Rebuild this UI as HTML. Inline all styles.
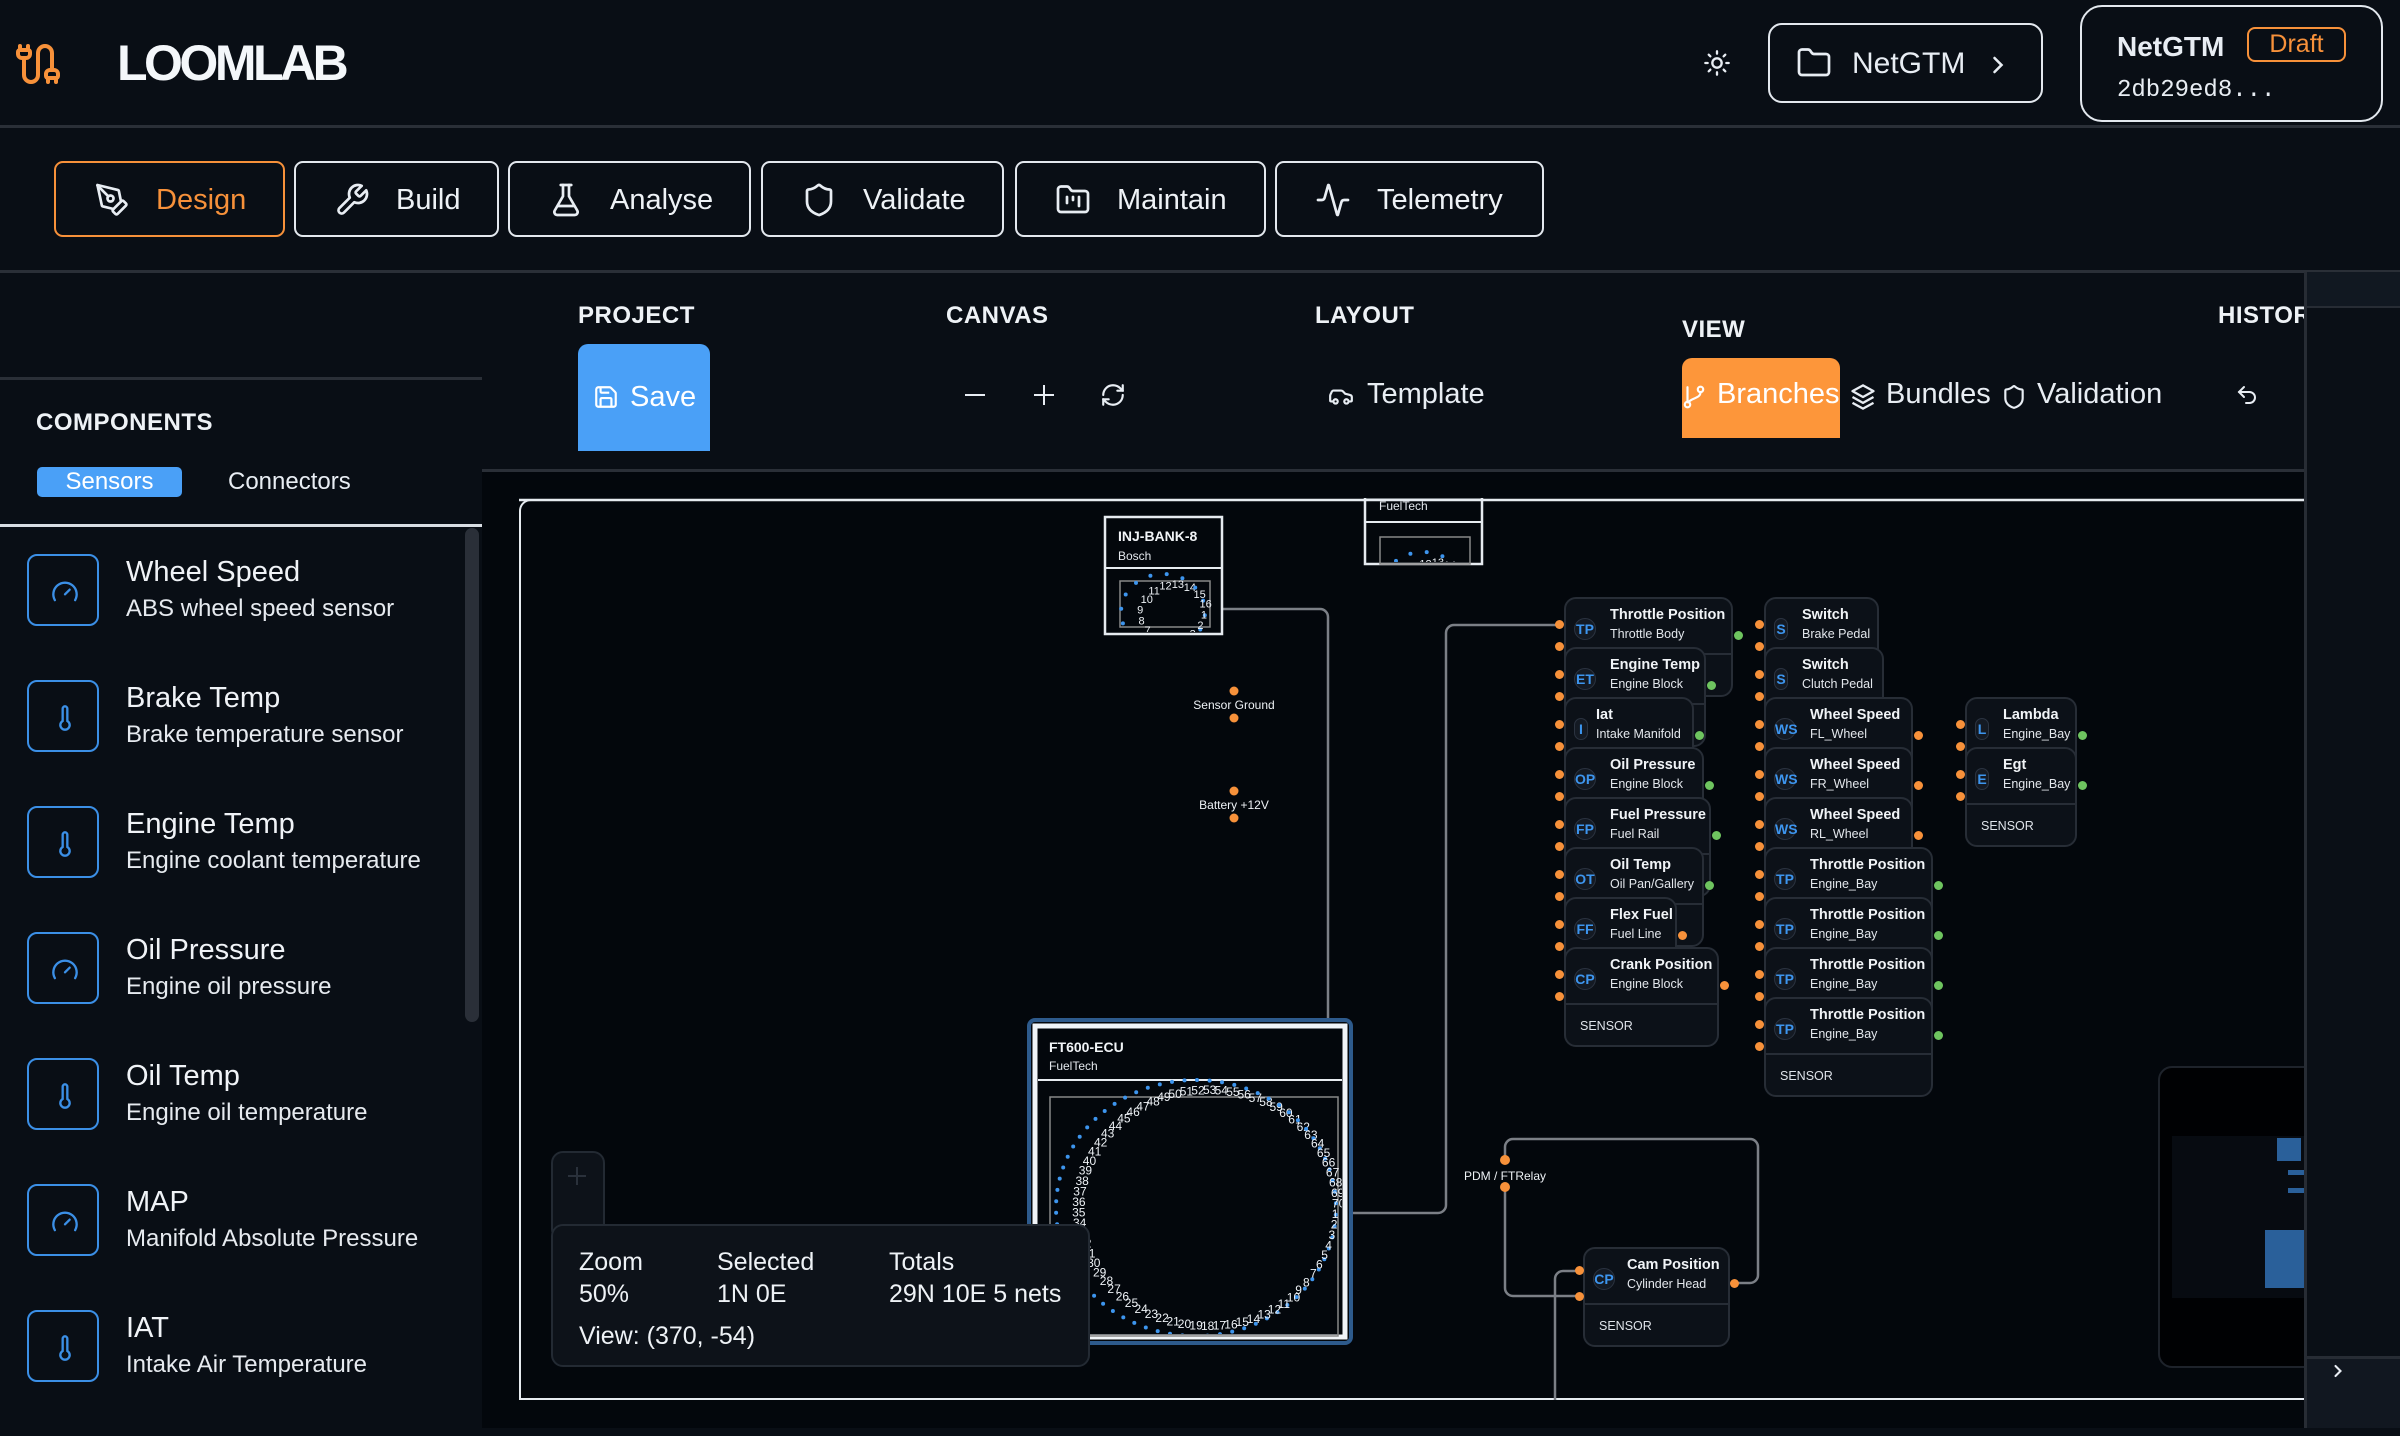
<!DOCTYPE html>
<html><head><meta charset="utf-8">
<style>
*{box-sizing:border-box;margin:0;padding:0}
body{width:2400px;height:1428px;overflow:hidden;background:#090e15;font-family:"Liberation Sans",sans-serif;color:#e8edf3;position:relative}
.a{position:absolute}
.tab{position:absolute;top:161px;height:76px;border:2px solid #e3e8ee;border-radius:9px;font-size:29px;font-weight:500;color:#eef2f6}
.tab svg{position:absolute;left:38px;top:19px}
.tab span{position:absolute;left:100px;top:21px}
.lbl{position:absolute;font-size:24px;font-weight:700;letter-spacing:.5px;color:#eef2f6}
.item{position:absolute;left:27px;width:440px;height:126px}
.item .ic{position:absolute;left:0;top:0;width:72px;height:72px;border:2px solid #3b8fe6;border-radius:10px}
.item .ic svg{position:absolute;left:22px;top:22px}
.item .t{position:absolute;left:99px;top:2px;font-size:29px;font-weight:500;color:#f0f3f7}
.item .d{position:absolute;left:99px;top:41px;font-size:24px;color:#e6eaef}
.node{position:absolute;height:100px;background:#0c1118;border:2px solid #272d36;border-radius:12px}
.node .sep{position:absolute;left:0;right:0;top:54px;border-top:2px solid #272d36}
.node .bd{position:absolute;left:8px;top:19px;width:22px;height:22px;border-radius:50%;background:#141a23;border:1px solid #2b3340;color:#3d95ee;font-size:14px;font-weight:700;text-align:center;line-height:20px}
.node .tt{position:absolute;top:8px;font-size:14.5px;font-weight:700;color:#f1f4f7;white-space:nowrap}
.node .st{position:absolute;top:28px;font-size:12.5px;color:#e3e7ec;white-space:nowrap}
.node .ft{position:absolute;left:14px;top:70px;font-size:12.5px;color:#dfe4ea}
.p{position:absolute;width:9px;height:9px;border-radius:50%}
.o{background:#f7913a}.g{background:#6ec45f}
</style></head><body>

<!-- header -->
<svg class="a" style="left:14px;top:40px" width="48" height="48" viewBox="0 0 24 24" fill="none" stroke="#f7913a" stroke-width="2" stroke-linecap="round" stroke-linejoin="round"><path d="M17 21v-2a1 1 0 0 1-1-1v-1a2 2 0 0 1 2-2h2a2 2 0 0 1 2 2v1a1 1 0 0 1-1 1"/><path d="M19 15V6.5a1 1 0 0 0-7 0v11a1 1 0 0 1-7 0V9"/><path d="M21 21v-2h-4"/><path d="M3 5h4V3"/><path d="M7 5a1 1 0 0 1 1 1v1a2 2 0 0 1-2 2H4a2 2 0 0 1-2-2V6a1 1 0 0 1 1-1V3"/></svg>
<div class="a" style="left:117px;top:34px;font-size:50px;font-weight:700;letter-spacing:-3.5px;color:#f4f7fa">LOOMLAB</div>

<svg class="a" style="left:1703px;top:49px" width="28" height="28" viewBox="0 0 24 24" fill="none" stroke="#e8edf3" stroke-width="2" stroke-linecap="round"><circle cx="12" cy="12" r="4"/><path d="M12 2v2M12 20v2M4.9 4.9l1.4 1.4M17.7 17.7l1.4 1.4M2 12h2M20 12h2M6.3 17.7l-1.4 1.4M19.1 4.9l-1.4 1.4"/></svg>

<div class="a" style="left:1768px;top:23px;width:275px;height:80px;border:2px solid #e3e8ee;border-radius:14px">
<svg class="a" style="left:26px;top:20px" width="36" height="36" viewBox="0 0 24 24" fill="none" stroke="#e8edf3" stroke-width="1.8" stroke-linejoin="round"><path d="M20 20a2 2 0 0 0 2-2V8a2 2 0 0 0-2-2h-7.9a2 2 0 0 1-1.69-.9L9.6 3.9A2 2 0 0 0 7.930 3H4a2 2 0 0 0-2 2v13a2 2 0 0 0 2 2Z"/></svg>
<div class="a" style="left:82px;top:22px;font-size:30px;font-weight:500">NetGTM</div>
<svg class="a" style="left:214px;top:26px" width="28" height="28" viewBox="0 0 24 24" fill="none" stroke="#e8edf3" stroke-width="2.2" stroke-linecap="round"><path d="m9 18 6-6-6-6"/></svg>
</div>

<div class="a" style="left:2080px;top:5px;width:303px;height:117px;border:2px solid #e3e8ee;border-radius:22px">
<div class="a" style="left:35px;top:24px;font-size:28px;font-weight:700">NetGTM</div>
<div class="a" style="left:165px;top:20px;width:99px;height:35px;border:2px solid #f7913a;border-radius:8px;color:#f7913a;font-size:25px;text-align:center;line-height:31px">Draft</div>
<div class="a" style="left:35px;top:70px;font-size:24px;font-family:'Liberation Mono',monospace">2db29ed8...</div>
</div>
<div class="a" style="left:0;top:125px;width:2400px;height:3px;background:#2a2f37"></div>

<!-- tabs -->
<div class="tab" style="left:54px;width:231px;border-color:#f7913a;color:#f7913a">
<svg width="36" height="36" viewBox="0 0 24 24" fill="none" stroke="#e8edf3" stroke-width="1.8" stroke-linecap="round" stroke-linejoin="round"><path d="M15.7 21.3a1 1 0 0 1-1.4 0l-1.6-1.6a1 1 0 0 1 0-1.4l5.6-5.6a1 1 0 0 1 1.4 0l1.6 1.6a1 1 0 0 1 0 1.4Z"/><path d="m18 13-1.4-6.9a1 1 0 0 0-.8-.8L2.3 2 5.2 15.5a1 1 0 0 0 .8.8L13 18"/><path d="m2.3 2.3 7.3 7.3"/><circle cx="11" cy="11" r="2"/></svg><span>Design</span></div>
<div class="tab" style="left:294px;width:205px">
<svg width="36" height="36" viewBox="0 0 24 24" fill="none" stroke="#e8edf3" stroke-width="1.8" stroke-linecap="round" stroke-linejoin="round"><path d="M14.7 6.3a1 1 0 0 0 0 1.4l1.6 1.6a1 1 0 0 0 1.4 0l3.77-3.77a6 6 0 0 1-7.94 7.94l-6.91 6.91a2.12 2.12 0 0 1-3-3l6.91-6.91a6 6 0 0 1 7.94-7.940l-3.76 3.76z"/></svg><span>Build</span></div>
<div class="tab" style="left:508px;width:243px">
<svg width="36" height="36" viewBox="0 0 24 24" fill="none" stroke="#e8edf3" stroke-width="1.8" stroke-linecap="round" stroke-linejoin="round"><path d="M10 2v7.5L4.5 19A2 2 0 0 0 6.2 22h11.6a2 2 0 0 0 1.7-3L14 9.5V2"/><path d="M8.5 2h7"/><path d="M7 16h10"/></svg><span>Analyse</span></div>
<div class="tab" style="left:761px;width:243px">
<svg width="36" height="36" viewBox="0 0 24 24" fill="none" stroke="#e8edf3" stroke-width="1.8" stroke-linecap="round" stroke-linejoin="round"><path d="M20 13c0 5-3.5 7.5-7.66 8.95a1 1 0 0 1-.67-.01C7.5 20.5 4 18 4 13V6a1 1 0 0 1 1-1c2 0 4.5-1.2 6.24-2.72a1.17 1.17 0 0 1 1.52 0C14.51 3.81 17 5 19 5a1 1 0 0 1 1 1z"/></svg><span>Validate</span></div>
<div class="tab" style="left:1015px;width:251px">
<svg width="36" height="36" viewBox="0 0 24 24" fill="none" stroke="#e8edf3" stroke-width="1.8" stroke-linecap="round" stroke-linejoin="round"><path d="M4 20h16a2 2 0 0 0 2-2V8a2 2 0 0 0-2-2h-7.93a2 2 0 0 1-1.66-.9l-.82-1.2A2 2 0 0 0 7.93 3H4a2 2 0 0 0-2 2v13c0 1.1.9 2 2 2Z"/><path d="M8 10v4M12 10v2M16 10v6"/></svg><span>Maintain</span></div>
<div class="tab" style="left:1275px;width:269px">
<svg width="36" height="36" viewBox="0 0 24 24" fill="none" stroke="#e8edf3" stroke-width="1.8" stroke-linecap="round" stroke-linejoin="round"><path d="M22 12h-2.48a2 2 0 0 0-1.93 1.46l-2.35 8.36a.25.25 0 0 1-.48 0L9.24 2.18a.25.25 0 0 0-.48 0l-2.35 8.36A2 2 0 0 1 4.49 12H2"/></svg><span>Telemetry</span></div>
<div class="a" style="left:0;top:270px;width:2400px;height:3px;background:#2a2f37"></div>

<!-- left panel -->
<div class="a" style="left:0;top:377px;width:482px;height:3px;background:#2a2f37"></div>
<div class="lbl" style="left:36px;top:409px">COMPONENTS</div>
<div class="a" style="left:37px;top:467px;width:145px;height:30px;background:#4aa0f7;border-radius:5px;color:#fff;font-size:24px;font-weight:500;text-align:center;line-height:30px">Sensors</div>
<div class="a" style="left:228px;top:467px;font-size:24px;font-weight:500;line-height:30px">Connectors</div>
<div class="a" style="left:0;top:524px;width:482px;height:3px;background:#d8dde3"></div>
<div class="a" style="left:465px;top:528px;width:14px;height:494px;background:#2a2f38;border-radius:7px"></div>

<div class="item" style="top:554px"><div class="ic"><svg width="28" height="28" viewBox="0 0 24 24" fill="none" stroke="#3b8fe6" stroke-width="2" stroke-linecap="round"><path d="m12 14 4-4"/><path d="M3.34 19a10 10 0 1 1 17.32 0"/></svg></div><div class="t">Wheel Speed</div><div class="d">ABS wheel speed sensor</div></div>
<div class="item" style="top:680px"><div class="ic"><svg width="28" height="28" viewBox="0 0 24 24" fill="none" stroke="#3b8fe6" stroke-width="2" stroke-linecap="round"><path d="M14 4v10.54a4 4 0 1 1-4 0V4a2 2 0 0 1 4 0Z"/></svg></div><div class="t">Brake Temp</div><div class="d">Brake temperature sensor</div></div>
<div class="item" style="top:806px"><div class="ic"><svg width="28" height="28" viewBox="0 0 24 24" fill="none" stroke="#3b8fe6" stroke-width="2" stroke-linecap="round"><path d="M14 4v10.54a4 4 0 1 1-4 0V4a2 2 0 0 1 4 0Z"/></svg></div><div class="t">Engine Temp</div><div class="d">Engine coolant temperature</div></div>
<div class="item" style="top:932px"><div class="ic"><svg width="28" height="28" viewBox="0 0 24 24" fill="none" stroke="#3b8fe6" stroke-width="2" stroke-linecap="round"><path d="m12 14 4-4"/><path d="M3.34 19a10 10 0 1 1 17.32 0"/></svg></div><div class="t">Oil Pressure</div><div class="d">Engine oil pressure</div></div>
<div class="item" style="top:1058px"><div class="ic"><svg width="28" height="28" viewBox="0 0 24 24" fill="none" stroke="#3b8fe6" stroke-width="2" stroke-linecap="round"><path d="M14 4v10.54a4 4 0 1 1-4 0V4a2 2 0 0 1 4 0Z"/></svg></div><div class="t">Oil Temp</div><div class="d">Engine oil temperature</div></div>
<div class="item" style="top:1184px"><div class="ic"><svg width="28" height="28" viewBox="0 0 24 24" fill="none" stroke="#3b8fe6" stroke-width="2" stroke-linecap="round"><path d="m12 14 4-4"/><path d="M3.34 19a10 10 0 1 1 17.32 0"/></svg></div><div class="t">MAP</div><div class="d">Manifold Absolute Pressure</div></div>
<div class="item" style="top:1310px"><div class="ic"><svg width="28" height="28" viewBox="0 0 24 24" fill="none" stroke="#3b8fe6" stroke-width="2" stroke-linecap="round"><path d="M14 4v10.54a4 4 0 1 1-4 0V4a2 2 0 0 1 4 0Z"/></svg></div><div class="t">IAT</div><div class="d">Intake Air Temperature</div></div>

<!-- toolbar -->
<div class="lbl" style="left:578px;top:302px">PROJECT</div>
<div class="lbl" style="left:946px;top:302px">CANVAS</div>
<div class="lbl" style="left:1315px;top:302px">LAYOUT</div>
<div class="lbl" style="left:1682px;top:316px">VIEW</div>
<div class="lbl" style="left:2218px;top:302px;width:86px;overflow:hidden;white-space:nowrap">HISTORY</div>
<div class="a" style="left:578px;top:344px;width:132px;height:107px;background:#4aa0f7;border-radius:10px 10px 0 0">
<svg class="a" style="left:15px;top:40px" width="26" height="26" viewBox="0 0 24 24" fill="none" stroke="#fff" stroke-width="2" stroke-linejoin="round"><path d="M15.2 3a2 2 0 0 1 1.4.6l3.8 3.8a2 2 0 0 1 .6 1.4V19a2 2 0 0 1-2 2H5a2 2 0 0 1-2-2V5a2 2 0 0 1 2-2z"/><path d="M17 21v-7a1 1 0 0 0-1-1H8a1 1 0 0 0-1 1v7"/><path d="M7 3v4a1 1 0 0 0 1 1h7"/></svg>
<div class="a" style="left:52px;top:37px;font-size:29px;font-weight:500;color:#fff">Save</div></div>
<div class="a" style="left:965px;top:394px;width:20px;height:2px;background:#e8edf3"></div>
<div class="a" style="left:1034px;top:394px;width:20px;height:2px;background:#e8edf3"></div>
<div class="a" style="left:1043px;top:385px;width:2px;height:20px;background:#e8edf3"></div>
<svg class="a" style="left:1100px;top:382px" width="26" height="26" viewBox="0 0 24 24" fill="none" stroke="#e8edf3" stroke-width="2" stroke-linecap="round"><path d="M3 12a9 9 0 0 1 9-9 9.75 9.75 0 0 1 6.74 2.74L21 8"/><path d="M21 3v5h-5"/><path d="M21 12a9 9 0 0 1-9 9 9.75 9.75 0 0 1-6.74-2.74L3 16"/><path d="M8 16H3v5"/></svg>
<svg class="a" style="left:1328px;top:383px" width="26" height="26" viewBox="0 0 24 24" fill="none" stroke="#e8edf3" stroke-width="2" stroke-linecap="round"><path d="M19 17h2c.6 0 1-.4 1-1v-3c0-.9-.7-1.7-1.5-1.9C18.7 10.6 16 10 16 10s-1.3-1.4-2.2-2.3c-.5-.4-1.1-.7-1.8-.7H5c-.6 0-1.1.4-1.4.9l-1.4 2.9A3.7 3.7 0 0 0 2 12v4c0 .6.4 1 1 1h2"/><circle cx="7" cy="17" r="2"/><circle cx="17" cy="17" r="2"/></svg>
<div class="a" style="left:1367px;top:378px;font-size:29px;font-weight:500">Template</div>
<div class="a" style="left:1682px;top:358px;width:158px;height:80px;background:#fd963a;border-radius:10px 10px 0 0"></div>
<svg class="a" style="left:1681px;top:383px" width="26" height="28" viewBox="0 0 24 24" fill="none" stroke="#fff" stroke-width="2" stroke-linecap="round"><circle cx="6" cy="19" r="2.5"/><circle cx="18" cy="5" r="2.5"/><path d="M6 3v13.5M18 7.5c0 6-8 5-11.5 9.5"/></svg>
<div class="a" style="left:1717px;top:378px;font-size:29px;font-weight:500;color:#fff;width:123px;overflow:hidden;white-space:nowrap">Branches</div>
<svg class="a" style="left:1849px;top:382px" width="28" height="30" viewBox="0 0 24 24" fill="none" stroke="#e8edf3" stroke-width="2" stroke-linejoin="round"><path d="M12 2 3 7l9 5 9-5z"/><path d="m3 12 9 5 9-5"/><path d="m3 17 9 5 9-5"/></svg>
<div class="a" style="left:1886px;top:378px;font-size:29px;font-weight:500">Bundles</div>
<svg class="a" style="left:2001px;top:383px" width="26" height="28" viewBox="0 0 24 24" fill="none" stroke="#e8edf3" stroke-width="2" stroke-linejoin="round"><path d="M20 13c0 5-3.5 7.5-7.66 8.95a1 1 0 0 1-.67-.01C7.5 20.5 4 18 4 13V6a1 1 0 0 1 1-1c2 0 4.5-1.2 6.24-2.72a1.17 1.17 0 0 1 1.52 0C14.51 3.81 17 5 19 5a1 1 0 0 1 1 1z"/></svg>
<div class="a" style="left:2037px;top:378px;font-size:29px;font-weight:500">Validation</div>
<svg class="a" style="left:2235px;top:383px" width="24" height="24" viewBox="0 0 24 24" fill="none" stroke="#e8edf3" stroke-width="2" stroke-linecap="round"><path d="M9 14 4 9l5-5"/><path d="M4 9h10.5a5.5 5.5 0 0 1 5.5 5.5v0a5.5 5.5 0 0 1-5.5 5.5H11"/></svg>

<!-- canvas -->
<div class="a" style="left:482px;top:469px;width:1822px;height:3px;background:#2a2f37"></div>
<div class="a" style="left:482px;top:472px;width:1822px;height:956px;background:#03070c"></div>
<div class="a" style="left:519px;top:499px;width:1790px;height:901px;border:2px solid #e6ebf0;border-radius:12px 0 0 0"></div>

<svg class="a" style="left:0;top:0" width="2400" height="1428" id="cv">
<defs>
<clipPath id="ecc"><rect x="1038" y="1040" width="304" height="294"/></clipPath>
<clipPath id="injc"><rect x="1107" y="570" width="113" height="62"/></clipPath>
<clipPath id="ftc"><rect x="1367" y="524" width="113" height="38"/></clipPath>
</defs>
<g fill="none" stroke="#7b7f86" stroke-width="2.5">
<path d="M1223 609 H1320 a8 8 0 0 1 8 8 V1130"/>
<path d="M1560 625 H1454 a8 8 0 0 0 -8 8 V1205 a8 8 0 0 1 -8 8 H1352"/>
<path d="M1505 1160 V1147 a8 8 0 0 1 8 -8 H1750 a8 8 0 0 1 8 8 V1275 a8 8 0 0 1 -8 8 H1735"/>
<path d="M1505 1187 V1288 a8 8 0 0 0 8 8 H1580"/>
<path d="M1580 1271 H1563 a8 8 0 0 0 -8 8 V1400"/>
</g>
<!-- INJ -->
<rect x="1105" y="517" width="117" height="117" fill="#03070c" stroke="#e6ebf0" stroke-width="2.5"/>
<line x1="1105" y1="568" x2="1222" y2="568" stroke="#e6ebf0" stroke-width="2"/>
<text x="1118" y="541" fill="#f1f4f7" font-size="14" font-weight="700" font-family="Liberation Sans">INJ-BANK-8</text>
<text x="1118" y="560" fill="#e3e7ec" font-size="12" font-family="Liberation Sans">Bosch</text>
<rect x="1120" y="581" width="90" height="46" fill="none" stroke="#888" stroke-width="1.5"/>
<g id="inj" clip-path="url(#injc)"></g>
<!-- fueltech top -->
<rect x="1365" y="497" width="117" height="67" fill="#03070c" stroke="#e6ebf0" stroke-width="2.5"/>
<line x1="1365" y1="522" x2="1482" y2="522" stroke="#e6ebf0" stroke-width="2"/>
<text x="1379" y="510" fill="#e3e7ec" font-size="12" font-family="Liberation Sans">FuelTech</text>
<rect x="1380" y="537" width="90" height="27" fill="none" stroke="#888" stroke-width="1.5"/>
<g id="ft" clip-path="url(#ftc)"></g>
<rect x="519" y="480" width="1790" height="18" fill="#03070c"/>
<line x1="519" y1="500" x2="2304" y2="500" stroke="#e6ebf0" stroke-width="2.5"/>
<!-- ECU -->
<rect x="1029" y="1020" width="322" height="323" rx="6" fill="#03070c" stroke="#2d5a8c" stroke-width="4"/>
<rect x="1035" y="1026" width="310" height="311" fill="none" stroke="#f0f4f8" stroke-width="5"/>
<line x1="1038" y1="1080" x2="1342" y2="1080" stroke="#e6ebf0" stroke-width="2"/>
<text x="1049" y="1052" fill="#f1f4f7" font-size="14" font-weight="700" font-family="Liberation Sans">FT600-ECU</text>
<text x="1049" y="1070" fill="#e3e7ec" font-size="12" font-family="Liberation Sans">FuelTech</text>
<rect x="1050" y="1097" width="288" height="239" fill="none" stroke="#888" stroke-width="1.5"/>
<g id="ecu" clip-path="url(#ecc)"></g>
<!-- labels -->
<circle cx="1234" cy="691" r="4.5" fill="#f7913a"/><circle cx="1234" cy="718" r="4.5" fill="#f7913a"/>
<text x="1234" y="709" text-anchor="middle" fill="#eef2f6" font-size="12" font-family="Liberation Sans">Sensor Ground</text>
<circle cx="1234" cy="791" r="4.5" fill="#f7913a"/><circle cx="1234" cy="818" r="4.5" fill="#f7913a"/>
<text x="1234" y="809" text-anchor="middle" fill="#eef2f6" font-size="12" font-family="Liberation Sans">Battery +12V</text>
<circle cx="1505" cy="1160" r="5" fill="#f7913a"/><circle cx="1505" cy="1187" r="5" fill="#f7913a"/>
<text x="1505" y="1180" text-anchor="middle" fill="#eef2f6" font-size="12" font-family="Liberation Sans">PDM / FTRelay</text>
</svg>

<div id="nodes"></div>

<!-- cam position -->
<div class="node" style="left:1583px;top:1247px;width:147px;height:100px"><div class="sep"></div><div class="bd">CP</div><div class="tt" style="left:42px">Cam Position</div><div class="st" style="left:42px">Cylinder Head</div><div class="ft">SENSOR</div></div>
<div class="p o" style="left:1575px;top:1266px"></div><div class="p o" style="left:1575px;top:1292px"></div><div class="p o" style="left:1730px;top:1279px"></div>

<!-- zoom ctrl + stats -->
<div class="a" style="left:551px;top:1151px;width:54px;height:90px;background:#0d1219;border:2px solid #232a33;border-radius:12px"></div>
<div class="a" style="left:568px;top:1175px;width:18px;height:2px;background:#2a313b"></div>
<div class="a" style="left:576px;top:1167px;width:2px;height:18px;background:#2a313b"></div>
<div class="a" style="left:551px;top:1224px;width:539px;height:143px;background:#0d1219;border:2px solid #232a33;border-radius:12px;font-size:25px;color:#eef2f6">
<div class="a" style="left:26px;top:22px">Zoom</div><div class="a" style="left:26px;top:54px;font-weight:500">50%</div>
<div class="a" style="left:164px;top:22px">Selected</div><div class="a" style="left:164px;top:54px;font-weight:500">1N 0E</div>
<div class="a" style="left:336px;top:22px">Totals</div><div class="a" style="left:336px;top:54px;font-weight:500">29N 10E 5 nets</div>
<div class="a" style="left:26px;top:96px">View: (370, -54)</div></div>

<!-- minimap -->
<div class="a" style="left:2158px;top:1066px;width:160px;height:302px;background:#000103;border:2px solid #1e232b;border-radius:14px 0 0 14px"></div>
<div class="a" style="left:2172px;top:1136px;width:132px;height:162px;background:#070b11"></div>
<div class="a" style="left:2277px;top:1138px;width:24px;height:23px;background:#2a609a"></div>
<div class="a" style="left:2288px;top:1170px;width:16px;height:5px;background:#2a609a"></div>
<div class="a" style="left:2288px;top:1188px;width:16px;height:5px;background:#2a609a"></div>
<div class="a" style="left:2265px;top:1230px;width:39px;height:58px;background:#2a609a"></div>

<!-- right panel -->
<div class="a" style="left:2304px;top:272px;width:96px;height:1156px;background:#0a0f16;border-left:3px solid #272c34"></div>
<div class="a" style="left:2307px;top:272px;width:93px;height:36px;background:#111821;border-bottom:2px solid #272c34"></div>
<div class="a" style="left:2307px;top:1356px;width:93px;height:72px;background:#111720;border-top:3px solid #272c34"></div>
<svg class="a" style="left:2328px;top:1361px" width="20" height="20" viewBox="0 0 24 24" fill="none" stroke="#e8edf3" stroke-width="2.5" stroke-linecap="round"><path d="m9 18 6-6-6-6"/></svg>

<script>
var N=[
[1564,597,1733,'TP','Throttle Position','Throttle Body','g'],
[1564,647,1706,'ET','Engine Temp','Engine Block','g'],
[1564,697,1694,'I','Iat','Intake Manifold','g'],
[1564,747,1704,'OP','Oil Pressure','Engine Block','g'],
[1564,797,1711,'FP','Fuel Pressure','Fuel Rail','g'],
[1564,847,1704,'OT','Oil Temp','Oil Pan/Gallery','g'],
[1564,897,1677,'FF','Flex Fuel','Fuel Line','o'],
[1564,947,1719,'CP','Crank Position','Engine Block','o'],
[1764,597,1879,'S','Switch','Brake Pedal',''],
[1764,647,1884,'S','Switch','Clutch Pedal',''],
[1764,697,1913,'WS','Wheel Speed','FL_Wheel','o'],
[1764,747,1913,'WS','Wheel Speed','FR_Wheel','o'],
[1764,797,1913,'WS','Wheel Speed','RL_Wheel','o'],
[1764,847,1933,'TP','Throttle Position','Engine_Bay','g'],
[1764,897,1933,'TP','Throttle Position','Engine_Bay','g'],
[1764,947,1933,'TP','Throttle Position','Engine_Bay','g'],
[1764,997,1933,'TP','Throttle Position','Engine_Bay','g'],
[1965,697,2077,'L','Lambda','Engine_Bay','g'],
[1965,747,2077,'E','Egt','Engine_Bay','g']];
var h='';
N.forEach(function(n){var w=n[2]-n[0];var off=n[3].length==2?44:(n[3]=='I'?30:36);
h+='<div class="node" style="left:'+n[0]+'px;top:'+n[1]+'px;width:'+w+'px"><div class="sep"></div><div class="bd" style="'+(n[3].length==1?'width:14px;border-radius:7px;':'')+'">'+n[3]+'</div><div class="tt" style="left:'+off+'px">'+n[4]+'</div><div class="st" style="left:'+off+'px">'+n[5]+'</div><div class="ft">SENSOR</div></div>';
h+='<div class="p o" style="left:'+(n[0]-9)+'px;top:'+(n[1]+23)+'px"></div><div class="p o" style="left:'+(n[0]-9)+'px;top:'+(n[1]+45)+'px"></div>';
if(n[6])h+='<div class="p '+n[6]+'" style="left:'+(n[2]+1)+'px;top:'+(n[1]+34)+'px"></div>';
});
document.getElementById('nodes').innerHTML=h;
function pins(id,cx,cy,rx,ry,cnt,start,fs){var s='';for(var i=1;i<=cnt;i++){var a=(start+(i-1)/cnt*360)*Math.PI/180;var x=cx+rx*Math.cos(a),y=cy+ry*Math.sin(a);var lx=cx+(rx-10)*Math.cos(a)+6,ly=cy+(ry-10)*Math.sin(a)+4;
s+='<circle cx="'+x.toFixed(1)+'" cy="'+y.toFixed(1)+'" r="2" fill="#3d95ee"/><text x="'+lx.toFixed(1)+'" y="'+ly.toFixed(1)+'" fill="#eef2f6" font-size="'+fs+'" font-family="Liberation Sans">'+i+'</text>';}
document.getElementById(id).innerHTML=s;}
pins('ecu',1196,1208,140,128,70,3,12);
pins('inj',1163,612,42,38,16,5,11);
pins('ft',1423,590,42,38,16,5,11);
</script>
</body></html>
